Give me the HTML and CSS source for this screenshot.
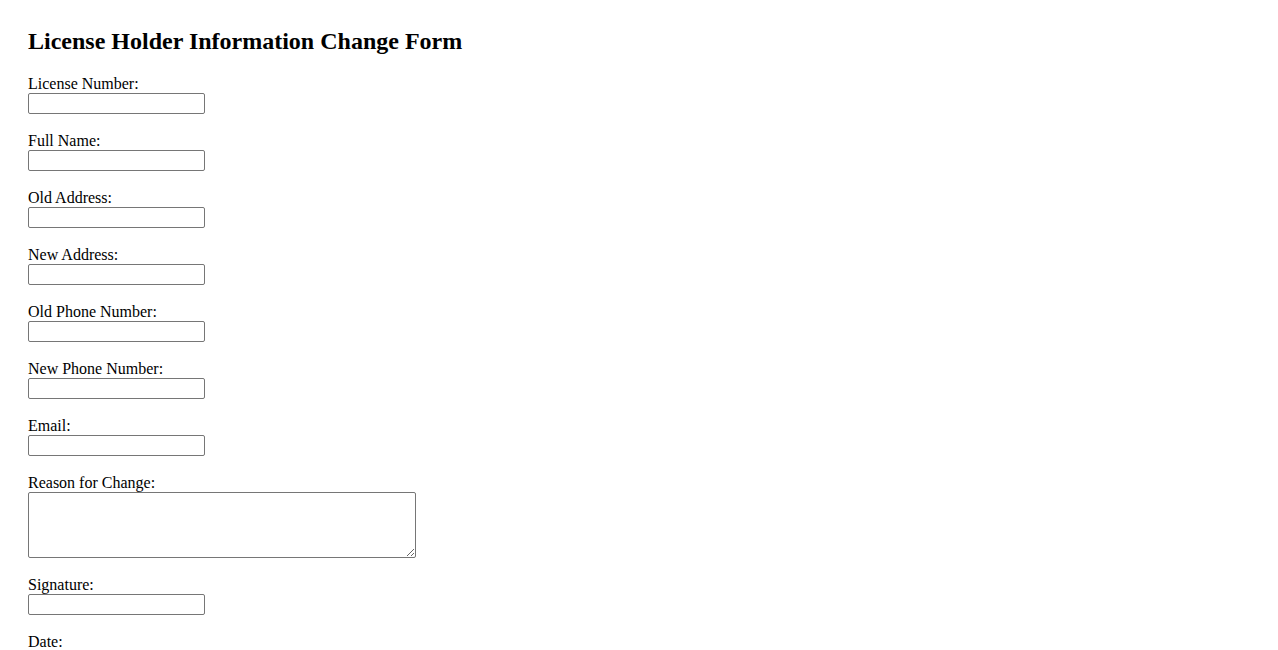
FILE: index.html
```html
<!DOCTYPE html>
<html lang="en">
<head>
<meta charset="utf-8">
<title>License Holder Information Change Form</title>
<link rel="stylesheet" href="styles.css">
</head>
<body>
<div class="page">
  <h2 class="title">License Holder Information Change Form</h2>
  <form class="form">
    <div class="field"><label class="label" for="lic">License Number:</label><input class="input" id="lic" type="text"></div>
    <div class="field"><label class="label" for="name">Full Name:</label><input class="input" id="name" type="text"></div>
    <div class="field"><label class="label" for="oaddr">Old Address:</label><input class="input" id="oaddr" type="text"></div>
    <div class="field"><label class="label" for="naddr">New Address:</label><input class="input" id="naddr" type="text"></div>
    <div class="field"><label class="label" for="ophone">Old Phone Number:</label><input class="input" id="ophone" type="text"></div>
    <div class="field"><label class="label" for="nphone">New Phone Number:</label><input class="input" id="nphone" type="text"></div>
    <div class="field"><label class="label" for="email">Email:</label><input class="input" id="email" type="text"></div>
    <div class="field"><label class="label" for="reason">Reason for Change:</label><textarea class="textarea" id="reason"></textarea></div>
    <div class="field"><label class="label" for="sig">Signature:</label><input class="input" id="sig" type="text"></div>
    <div class="field"><label class="label" for="date">Date:</label><input class="input" id="date" type="text"></div>
  </form>
</div>
</body>
</html>
```

FILE: styles.css
```css
html, body {
  background: #ffffff;
}
body {
  margin: 8px;
  font-family: "Liberation Serif", "Times New Roman", serif;
  font-size: 16px;
  color: #000000;
}
.page {
  padding: 20px;
}
.title {
  margin: 0 0 20px 0;
  font-size: 24px;
  font-weight: bold;
  line-height: 27px;
}
.form {
  display: flex;
  flex-direction: column;
  gap: 18px;
}
.field {
  display: flex;
  flex-direction: column;
  align-items: flex-start;
}
.label {
  display: block;
  line-height: 18px;
}
.input {
  box-sizing: border-box;
  width: 177px;
  height: 21px;
  margin: 0;
  padding: 1px 2px;
  border: 1px solid #767676;
  border-radius: 2px;
  background: #ffffff;
  font-family: "Liberation Sans", Arial, sans-serif;
  font-size: 13.333px;
}
.textarea {
  box-sizing: border-box;
  width: 388px;
  height: 66px;
  margin: 0;
  padding: 2px;
  border: 1px solid #767676;
  border-radius: 2px;
  background: #ffffff;
  font-family: "Liberation Mono", monospace;
  font-size: 13.333px;
}
```
